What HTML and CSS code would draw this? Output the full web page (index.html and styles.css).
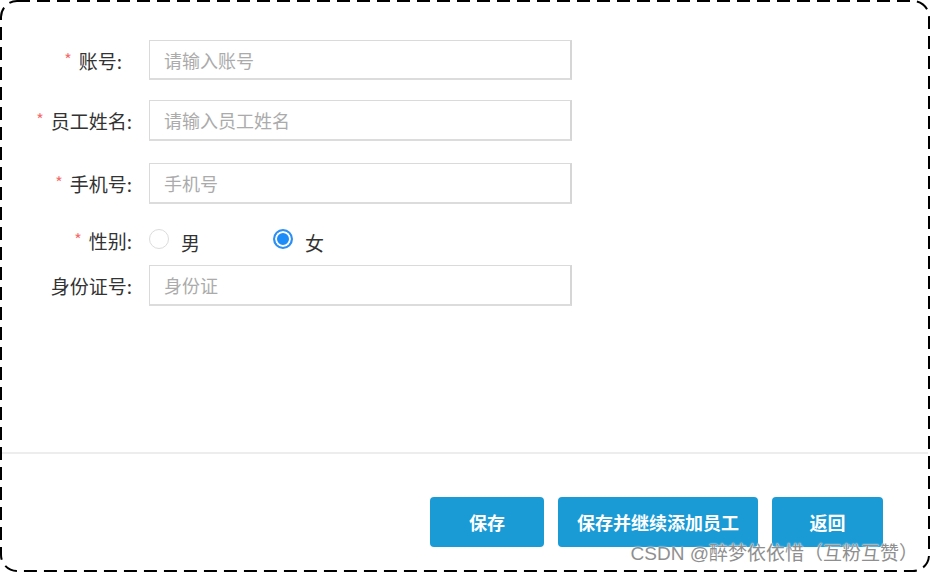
FILE: index.html
```html
<!DOCTYPE html>
<html lang="zh-CN">
<head>
<meta charset="utf-8">
<title>添加员工</title>
<link rel="stylesheet" href="styles.css">
</head>
<body>
<div class="frame">
  <form class="form">
    <div class="row row-1">
      <label class="label label-short"><span class="req">*</span>账号:</label>
      <input class="input" type="text" placeholder="请输入账号">
    </div>
    <div class="row row-2">
      <label class="label"><span class="req">*</span>员工姓名:</label>
      <input class="input" type="text" placeholder="请输入员工姓名">
    </div>
    <div class="row row-3">
      <label class="label"><span class="req">*</span>手机号:</label>
      <input class="input" type="text" placeholder="手机号">
    </div>
    <div class="row row-radio">
      <label class="label"><span class="req">*</span>性别:</label>
      <div class="radios">
        <span class="radio"><span class="dot"></span><span class="rtext">男</span></span>
        <span class="radio checked"><span class="dot"></span><span class="rtext">女</span></span>
      </div>
    </div>
    <div class="row row-5">
      <label class="label">身份证号:</label>
      <input class="input" type="text" placeholder="身份证">
    </div>
  </form>
  <div class="divider"></div>
  <div class="footer">
    <button class="btn btn-save" type="button">保存</button>
    <button class="btn btn-more" type="button">保存并继续添加员工</button>
    <button class="btn btn-back" type="button">返回</button>
  </div>
  <div class="watermark">CSDN @醉梦依依惜（互粉互赞）</div>
  <svg class="frame-border" width="930" height="572" viewBox="0 0 930 572">
    <rect x="1" y="1" width="928" height="570" rx="16" ry="16" fill="none" stroke="#000" stroke-width="2" stroke-dasharray="13 7"></rect>
  </svg>
</div>
</body>
</html>
```

FILE: styles.css
```css
html, body {
  margin: 0;
  padding: 0;
  background: #fff;
}

.frame {
  position: relative;
  width: 930px;
  height: 572px;
  box-sizing: border-box;
  display: flex;
  flex-direction: column;
  font-family: "Noto Sans CJK SC", "Microsoft YaHei", sans-serif;
  color: #333;
  overflow: hidden;
}

.frame-border {
  position: absolute;
  left: 0;
  top: 0;
  pointer-events: none;
}

.form {
  height: 452px;
  box-sizing: border-box;
  padding-top: 40px;
  margin: 0;
  display: flex;
  flex-direction: column;
}

.row {
  display: flex;
  align-items: center;
}

.row-2 { margin-top: 20px; }
.row-3 { margin-top: 22px; }
.row-radio { margin-top: 18px; height: 36px; }
.row-5 { margin-top: 7px; }

.label {
  width: 149px;
  padding-right: 17px;
  box-sizing: border-box;
  text-align: right;
  font-size: 19px;
  color: #333;
  white-space: nowrap;
}

.label-short {
  padding-right: 27px;
}

.req {
  color: #f56c6c;
  font-size: 16px;
  margin-right: 7px;
  position: relative;
  top: -3px;
}

.input {
  width: 423px;
  height: 41px;
  box-sizing: border-box;
  border: 1px solid #dadada;
  border-right: 2px solid #d6d6d6;
  border-bottom: 2px solid #dcdcdc;
  padding: 0 14px;
  font-family: "Noto Sans CJK SC", "Microsoft YaHei", sans-serif;
  font-size: 18px;
  color: #333;
  outline: none;
  background: #fff;
}

.row-1 .input { height: 40px; }

.input::placeholder {
  color: #ababab;
}

.radios {
  display: flex;
  align-items: center;
}

.radio {
  display: flex;
  align-items: center;
  width: 124px;
}

.dot {
  width: 20px;
  height: 20px;
  box-sizing: border-box;
  border-radius: 50%;
  border: 1px solid #dcdcdc;
  background: #fff;
  margin-top: -2px;
}

.radio.checked .dot {
  border: 2px solid #2c8ff3;
  background: #1d8cf8;
  box-shadow: inset 0 0 0 2px #fff;
}

.rtext {
  margin-left: 12px;
  font-size: 19px;
  color: #333;
  padding-top: 4px;
}

.divider {
  height: 2px;
  margin: 0 2px;
  background: #ededed;
}

.footer {
  display: flex;
  justify-content: flex-end;
  padding-top: 43px;
  padding-right: 47px;
  gap: 14px;
}

.btn {
  height: 50px;
  border: none;
  border-radius: 4px;
  background: #1a9bd6;
  color: #fff;
  font-family: "Noto Sans CJK SC", "Microsoft YaHei", sans-serif;
  font-size: 18px;
  font-weight: bold;
  padding: 0;
  cursor: pointer;
}

.btn-save { width: 114px; }
.btn-more { width: 200px; }
.btn-back { width: 111px; }

.watermark {
  position: absolute;
  right: 12px;
  bottom: 7px;
  font-family: "Liberation Sans", "Noto Sans CJK SC", sans-serif;
  font-size: 19px;
  color: #8f8f8f;
  text-shadow: 0 0 2px #fff, 0 0 1px #fff;
  white-space: nowrap;
}
```
